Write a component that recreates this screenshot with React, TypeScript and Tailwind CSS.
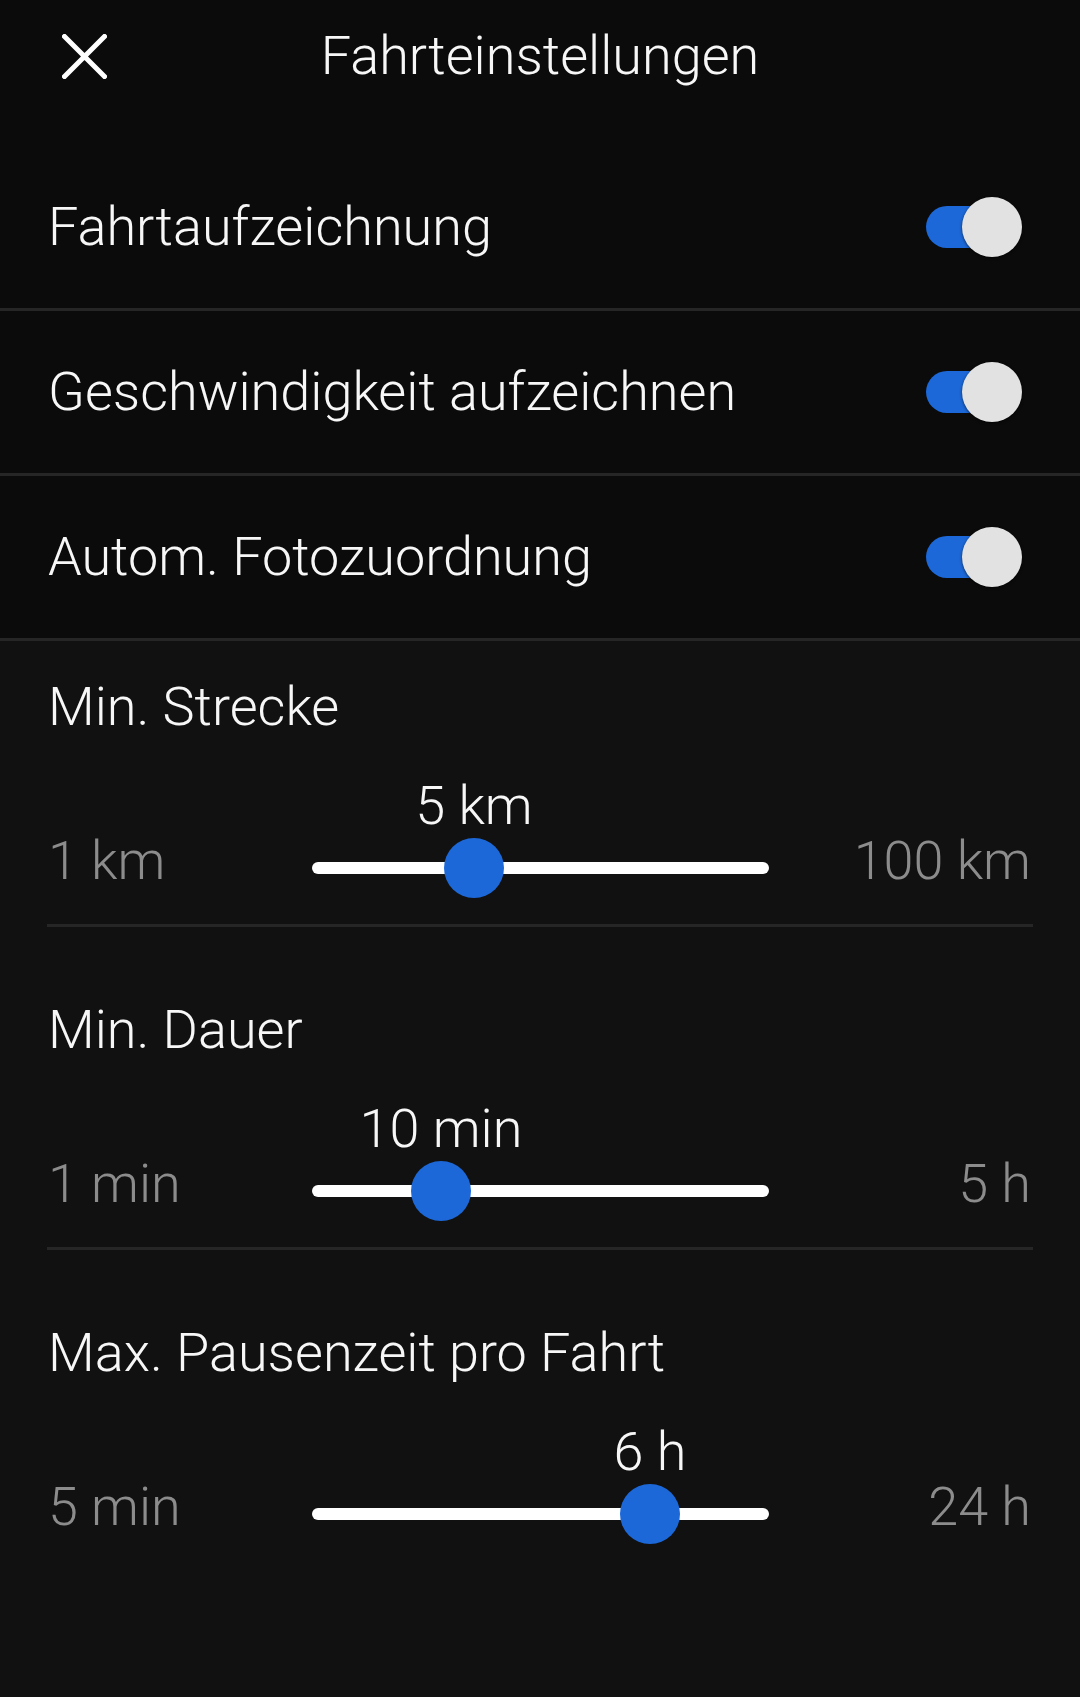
import React from "react";

const font = { fontFamily: "'Roboto Light', Roboto, 'Noto Sans', 'Liberation Sans', sans-serif" };

function Toggle() {
  return (
    <div className="relative w-[96px] h-[60px] flex items-center">
      <div className="absolute left-0 top-[9px] h-[42px] w-[84px] rounded-full bg-[#1c68d8]" />
      <div className="absolute right-0 top-0 h-[60px] w-[60px] rounded-full bg-[#e2e2e2] shadow-[0_1px_3px_rgba(0,0,0,0.6)]" />
    </div>
  );
}

function ToggleRow({ label }: { label: string }) {
  return (
    <div className="flex h-[162px] items-center justify-between pl-[48px] pr-[58px] border-b-[3px] border-[#262626] box-content">
      <span className="text-[54px] font-light text-[#f7f7f7] leading-[60px]">{label}</span>
      <Toggle />
    </div>
  );
}

function SliderSection({
  title,
  min,
  max,
  value,
  pos,
  first,
  last,
}: {
  title: string;
  min: string;
  max: string;
  value: string;
  pos: number;
  first?: boolean;
  last?: boolean;
}) {
  return (
    <div className={first ? "pt-[36px]" : "pt-[73px]"}>
      <div className="px-[48px] text-[54px] font-light leading-[60px] text-[#f7f7f7]">{title}</div>
      <div className="mt-[101px] flex items-center pl-[48px] pr-[49px] h-[60px]">
        <div className="w-[264px] pb-[14px] text-[54px] font-light leading-[60px] text-[#8c8c8c]">{min}</div>
        <div className="relative w-[457px] h-[60px] flex items-center">
          <div className="h-[12px] w-full rounded-full bg-white" />
          <div
            className="absolute top-0 h-[60px] w-[60px] -ml-[30px] rounded-full bg-[#1c68d8]"
            style={{ left: pos }}
          />
          <div
            className="absolute top-[-62px] -translate-x-1/2 whitespace-nowrap text-[54px] font-light leading-[60px] text-[#f7f7f7]"
            style={{ left: pos }}
          >
            {value}
          </div>
        </div>
        <div className="flex-1 pb-[14px] text-right text-[54px] font-light leading-[60px] text-[#8c8c8c]">{max}</div>
      </div>
      {last ? null : <div className="mt-[26px] mx-[47px] h-[3px] bg-[#262626]" />}
    </div>
  );
}

export default function App() {
  return (
    <div className="w-[1080px] h-[1697px] bg-[#111111] overflow-hidden" style={font}>
      <div className="bg-[#0b0b0b]">
        <div className="relative h-[146px]">
          <div className="flex h-[112px] items-center justify-center">
            <span className="text-[54px] font-light leading-[60px] text-[#f7f7f7]">Fahrteinstellungen</span>
          </div>
          <div className="absolute left-[62px] top-[34px]">
            <svg width="45" height="45" viewBox="0 0 45 45" fill="none">
              <path d="M2.5 2.5 L42.5 42.5 M42.5 2.5 L2.5 42.5" stroke="#ffffff" strokeWidth="5" strokeLinecap="square" />
            </svg>
          </div>
        </div>
        <ToggleRow label="Fahrtaufzeichnung" />
        <ToggleRow label="Geschwindigkeit aufzeichnen" />
        <ToggleRow label="Autom. Fotozuordnung" />
      </div>
      <SliderSection title="Min. Strecke" min="1 km" max="100 km" value="5 km" pos={162} first />
      <SliderSection title="Min. Dauer" min="1 min" max="5 h" value="10 min" pos={129} />
      <SliderSection title="Max. Pausenzeit pro Fahrt" min="5 min" max="24 h" value="6 h" pos={338} last />
    </div>
  );
}
